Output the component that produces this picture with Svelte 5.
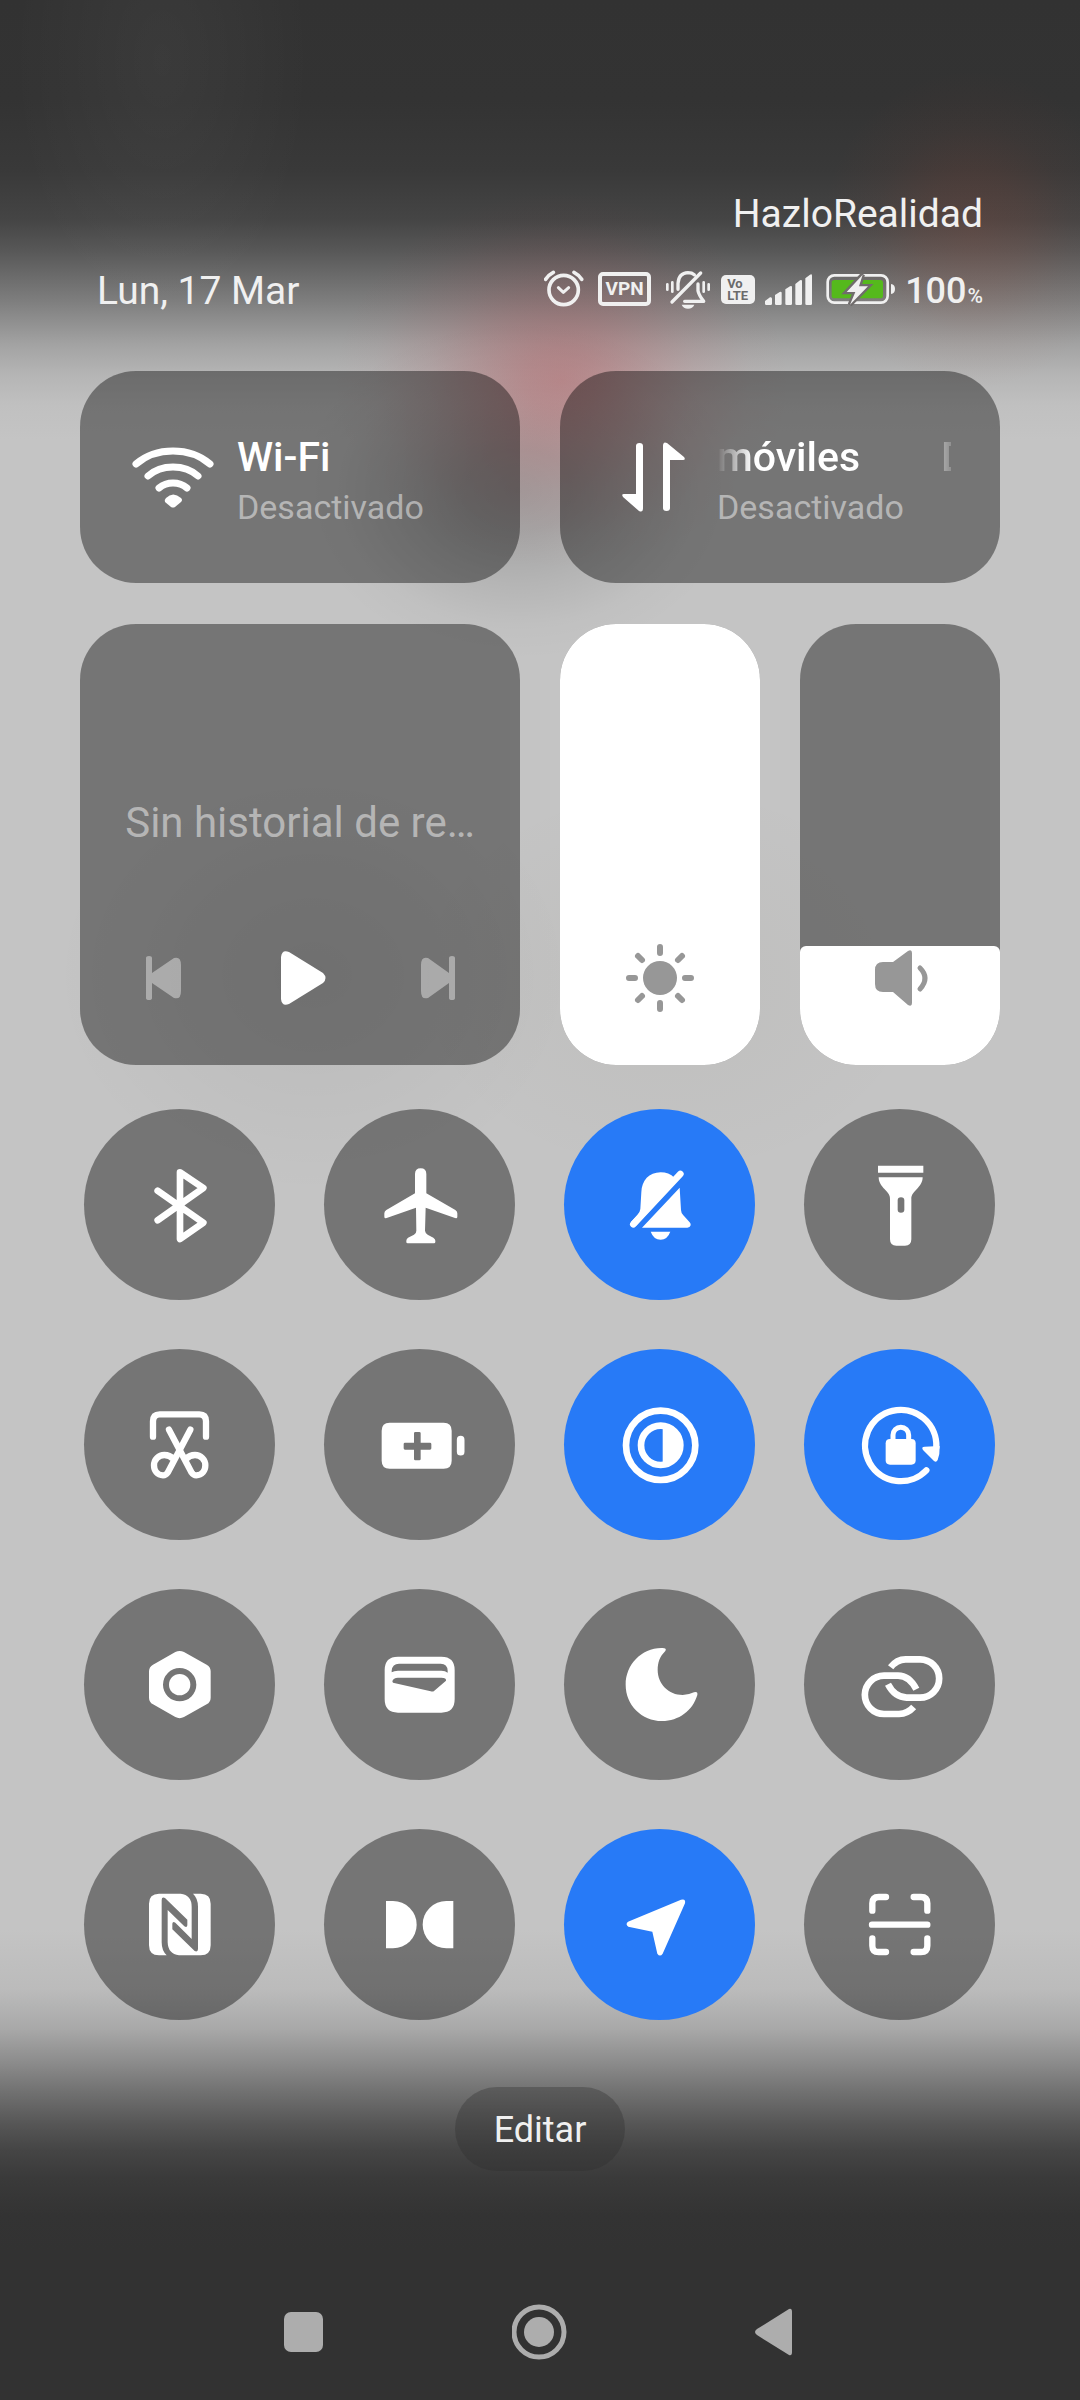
<script>
  let brightness = $state(100);
  let volume = $state(27);

  // Each shape is filled, unless it carries a stroke width (w).
  let toggles = $state([
    { name: 'Bluetooth', on: false, box: '184 169 288 288', shapes: [
      { w: 20, d: 'M261 270L398 366L328 415V215L398 262L261 359' }
    ] },
    { name: 'Modo avión', on: false, box: '904 169 288 288', shapes: [
      { d: 'M1033 220Q1033 203 1050 203Q1067 203 1067 220V278L1154 328Q1160 332 1160 338V348Q1160 354 1153 352L1065 321L1063 390Q1064 398 1071 402L1088 411Q1094 415 1094 420V424Q1094 428 1090 428H1011Q1007 428 1007 424V420Q1007 415 1012 411L1030 402Q1037 398 1037 390L1036 321L948 352Q941 354 941 348V338Q941 332 947 328L1033 278Z' }
    ] },
    { name: 'Silencio', on: true, box: '214 169 288 288', shapes: [
      { d: 'M402 232C390 220 376 215 360 215C325 215 303 240 302 275L299 325Q298 335 290 343L271 364L285 377L410 240Z' },
      { w: 20, d: 'M278 371L419 220' },
      { d: 'M304 381L417 261L421 328Q421 336 428 344L447 365Q451 370 450 374Q448 381 440 381Z' },
      { d: 'M330 393H389Q380 417 360 417Q339 417 330 393Z' }
    ] },
    { name: 'Linterna', on: false, box: '934 169 288 288', shapes: [
      { d: 'M1012 195H1148V216H1012Z' },
      { d: 'M1014 230H1146C1146 245 1138 255 1128 266C1116 279 1112 284 1112 296V416Q1112 435 1093 435H1067Q1048 435 1048 416V296C1048 284 1044 279 1032 266C1022 255 1014 245 1014 230ZM1071 299V327Q1071 336 1081 336Q1091 336 1091 327V299Q1091 290 1081 290Q1071 290 1071 299Z' }
    ] },
    { name: 'Captura de pantalla', on: false, box: '184 889 288 288', shapes: [
      { w: 19, d: 'M247 1008V962Q247 941 267 941H386Q406 941 406 962V1008' },
      { w: 19, d: 'M359 987L291 1116Q286 1124 277 1124C260 1124 250 1110 250 1094C250 1076 264 1063 281 1063Q297 1063 308 1075' },
      { w: 19, d: 'M295 987L363 1116Q368 1124 377 1124C394 1124 404 1110 404 1094C404 1076 390 1063 373 1063Q357 1063 346 1075' }
    ] },
    { name: 'Ahorro de batería', on: false, box: '904 889 288 288', shapes: [
      { d: 'M957 966H1119Q1143 966 1143 990V1080Q1143 1104 1119 1104H957Q933 1104 933 1080V990Q933 966 957 966ZM1034 994Q1030 994 1030 998V1026H1003Q999 1026 999 1030V1043Q999 1047 1003 1047H1030V1075Q1030 1079 1034 1079H1046Q1050 1079 1050 1075V1047H1078Q1082 1047 1082 1043V1030Q1082 1026 1078 1026H1050V998Q1050 994 1046 994Z' },
      { w: 23, d: 'M1170 1017V1053' }
    ] },
    { name: 'Modo oscuro', on: true, box: '214 889 288 288', shapes: [
      { w: 20, d: 'M256 1034A104 104 0 1 1 464 1034A104 104 0 1 1 256 1034Z' },
      { w: 20, d: 'M301 1034A59 59 0 1 1 419 1034A59 59 0 1 1 301 1034Z' },
      { d: 'M366 980A54 54 0 0 1 366 1088Z' }
    ] },
    { name: 'Bloqueo de rotación', on: true, box: '934 889 288 288', shapes: [
      { w: 19, d: 'M1157 1109A107 107 0 1 1 1187 1040' },
      { d: 'M1152 1038Q1141 1038 1147 1048L1180 1081Q1187 1086 1191 1078Q1198 1060 1197 1036Z' },
      { d: 'M1048 1015H1112Q1125 1015 1125 1028V1079Q1125 1092 1112 1092H1048Q1035 1092 1035 1079V1028Q1035 1015 1048 1015Z' },
      { w: 15, d: 'M1057 1022V1003A23 23 0 0 1 1104 1003V1022' }
    ] },
    { name: 'Ajustes', on: false, box: '184 169 288 288', shapes: [
      { d: 'M314 214Q327 208 340 214L408 252Q420 259 420 272V351Q420 364 408 371L340 409Q327 416 314 409L247 371Q235 364 235 351V272Q235 259 247 252ZM277 312A50 50 0 1 0 377 312A50 50 0 1 0 277 312Z' },
      { d: 'M295 312A32 32 0 1 0 359 312A32 32 0 1 0 295 312Z' }
    ] },
    { name: 'Cartera', on: false, box: '904 169 288 288', shapes: [
      { d: 'M982 228H1112Q1152 228 1152 268V356Q1152 396 1112 396H982Q942 396 942 356V268Q942 228 982 228ZM963 275V270Q965 249 985 249H1110Q1130 249 1131 270V276Q1124 270 1112 270H982Q970 270 963 275ZM965 302Q968 291 982 291H1112Q1128 291 1126 300L1091 330Q1087 334 1080 332L967 306Z' }
    ] },
    { name: 'No molestar', on: false, box: '214 169 288 288', shapes: [
      { d: 'M362 202Q380 201 374 211C357 228 351 246 351 268C351 310 384 343 426 343Q443 343 460 335Q472 331 470 343C456 390 415 421 364 421C303 421 255 373 255 312C255 252 302 203 362 202Z' }
    ] },
    { name: 'Compartir conexión', on: false, box: '934 169 288 288', shapes: [
      { w: 20, flat: true, d: 'M1127 326Q1106 285 1072 285H1030A57 57 0 0 0 1030 400H1075Q1101 399 1119 379' },
      { w: 20, flat: true, d: 'M1050 260Q1068 236 1095 236H1138A57 57 0 0 1 1138 351H1098Q1062 350 1042 311' }
    ] },
    { name: 'NFC', on: false, box: '184 889 288 288', shapes: [
      { d: 'M265 939H390Q420 939 420 969V1094Q420 1124 390 1124H265Q235 1124 235 1094V969Q235 939 265 939ZM288 1124Q273 1110 273 1085V958Q273 948 283 952L350 1017V1034Q349 1042 341 1037L291 988V1085Q292 1120 325 1124ZM367 939Q382 953 382 978V1105Q382 1115 372 1111L305 1046V1029Q306 1021 314 1026L363 1075V978Q363 943 330 939Z' }
    ] },
    { name: 'Dolby Atmos', on: false, box: '904 889 288 288', shapes: [
      { d: 'M946 961H967A71 71 0 0 1 967 1103H946Z' },
      { d: 'M1148 961H1127A71 71 0 0 0 1127 1103H1148Z' }
    ] },
    { name: 'Ubicación', on: true, box: '214 889 288 288', shapes: [
      { d: 'M421 957Q436 953 433 968L366 1119Q358 1130 350 1119L335 1053L263 1038Q253 1031 262 1023Z' }
    ] },
    { name: 'Escáner', on: false, box: '934 889 288 288', shapes: [
      { w: 19, d: 'M995 990V968Q995 949 1014 949H1036M1160 990V968Q1160 949 1141 949H1119M995 1073V1095Q995 1114 1014 1114H1036M1160 1073V1095Q1160 1114 1141 1114H1119M994 1032H1160' }
    ] }
  ]);
</script>

<main class="shade">
  <header class="head">
    <p class="carrier">HazloRealidad</p>
    <div class="bar">
      <p class="date">Lun, 17 Mar</p>
      <div class="status">
        <svg width="44" height="44" viewBox="78 297 132 132" aria-hidden="true">
          <g class="line">
            <circle cx="137" cy="360" r="44" stroke-width="11" />
            <path stroke-width="11" d="M83 328Q92 314 106 307M168 307Q182 314 191 328" />
            <path stroke-width="9" d="M121 353L136 367L152 353" />
          </g>
        </svg>
        <span class="vpn">VPN</span>
        <svg width="50" height="44" viewBox="429 297 150 132" aria-hidden="true">
          <g class="line">
            <path stroke-width="10" d="M480 358V340Q482 309 510 308Q522 308 529 314M462 396L548 309M540 342V362Q542 374 557 394H500" />
            <path stroke-width="8" d="M448 343V359M463 337V365M557 337V365M572 343V359" />
          </g>
          <path class="solid" d="M491 404H529Q524 416 510 416Q496 416 491 404Z" />
        </svg>
        <span class="volte">Vo<br />LTE</span>
        <svg width="47" height="44" viewBox="741 297 141 132" aria-hidden="true">
          <path class="solid" d="M741 393L756 382Q762 380 762 386V401Q762 405 758 405H745Q741 405 741 401ZM771 375L785 366Q791 363 791 369V401Q791 405 787 405H775Q771 405 771 401ZM802 358L816 349Q822 346 822 352V401Q822 405 818 405H806Q802 405 802 401ZM832 342L846 331Q852 328 852 334V401Q852 405 848 405H836Q832 405 832 401ZM862 325L876 314Q882 311 882 317V401Q882 405 878 405H866Q862 405 862 401Z" />
        </svg>
        <svg width="73" height="44" viewBox="912 297 219 132" aria-hidden="true">
          <rect class="line" x="929" y="316" width="180" height="82" rx="20" stroke-width="8" />
          <rect class="charge" x="941" y="330" width="154" height="55" rx="8" />
          <path class="solid" d="M1119 342Q1131 344 1131 357Q1131 370 1119 372Z" />
          <path class="halo" d="M1034 314L986 366H1012L996 404L1050 349H1023Z" />
          <path class="solid" d="M1034 314L986 366H1012L996 404L1050 349H1023Z" />
        </svg>
        <span class="level">100<small>%</small></span>
      </div>
    </div>
  </header>

  <section class="cards">
    <button class="card net">
      <svg width="86" height="72" viewBox="130 442 86 72" aria-hidden="true">
        <path class="white-line" d="M136 465Q151 452 173 452Q195 452 210 465M148 477Q158 468 173 468Q188 468 198 477M159 489Q165 484 173 484Q181 484 187 489" />
        <path class="white" d="M166 499Q173 492 181 499Q183 501 181 503L175 508Q173 509 171 508L165 503Q164 501 166 499Z" />
      </svg>
      <span class="words">
        <strong>Wi-Fi</strong>
        <span class="sub">Desactivado</span>
      </span>
    </button>
    <button class="card net">
      <svg width="86" height="72" viewBox="610 442 86 72" aria-hidden="true">
        <path class="white" d="M636 447Q636 444 639.500 444Q643 444 643 447V509Q643 514 639 512L623 498Q621 495 624 495H636ZM670 509Q670 512 666.500 512Q663 512 663 509V447Q663 442 667 444L684 458Q686 461 683 461H670Z" />
      </svg>
      <span class="words">
        <strong class="ticker"><span>móviles</span><span>Datos móviles</span></strong>
        <span class="sub">Desactivado</span>
      </span>
    </button>
  </section>

  <section class="cards">
    <div class="card media">
      <p class="track">Sin historial de re…</p>
      <div class="controls">
        <button aria-label="Anterior">
          <svg class="dim" width="60" height="60" viewBox="0 0 60 60"><path d="M13 10Q13 8 16 8Q19 8 19 10V25L41 10Q48 8 48 17V43Q48 52 41 50L19 35V50Q19 52 16 52Q13 52 13 50Z" /></svg>
        </button>
        <button aria-label="Reproducir">
          <svg class="white" width="60" height="60" viewBox="0 0 60 60"><path d="M11 9Q12 1 19 4L53 25Q58 30 53 35L19 56Q12 59 11 51Z" /></svg>
        </button>
        <button aria-label="Siguiente">
          <svg class="dim" width="60" height="60" viewBox="0 0 60 60"><path d="M48 10Q48 8 45 8Q42 8 42 10V25L21 10Q14 8 14 17V43Q14 52 21 50L42 35V50Q42 52 45 52Q48 52 48 50Z" /></svg>
        </button>
      </div>
    </div>
    <div class="sliders">
      <label class="card slider">
        <span class="fill" style:height="{brightness}%"></span>
        <svg class="mark" width="80" height="80" viewBox="0 0 80 80" aria-hidden="true">
          <circle cx="40" cy="40" r="17" />
          <path class="ray" d="M40 9V15M40 65V71M9 40H15M65 40H71M18 18L22 22M62 18L58 22M18 62L22 58M62 62L58 58" />
        </svg>
        <input type="range" min="0" max="100" bind:value={brightness} aria-label="Brillo" />
      </label>
      <label class="card slider">
        <span class="fill" style:height="{volume}%"></span>
        <svg class="mark" width="80" height="80" viewBox="0 0 80 80" aria-hidden="true">
          <path d="M15 32Q15 24 23 24H33L48 13Q52 11 52 15V65Q52 69 48 67L33 54H23Q15 54 15 46Z" />
          <path class="wave" d="M60 30Q70 40 60 51" />
        </svg>
        <input type="range" min="0" max="100" bind:value={volume} aria-label="Volumen" />
      </label>
    </div>
  </section>

  <section class="toggles">
    {#each toggles as t}
      <button class="toggle" class:on={t.on} aria-label={t.name} aria-pressed={t.on} onclick={() => (t.on = !t.on)}>
        <svg width="96" height="96" viewBox={t.box} aria-hidden="true">
          {#each t.shapes as s}
            <path d={s.d} class:stroke={s.w} class:flat={s.flat} stroke-width={s.w} />
          {/each}
        </svg>
      </button>
    {/each}
  </section>

  <button class="edit">Editar</button>

  <nav class="nav">
    <button aria-label="Recientes">
      <svg width="56" height="56" viewBox="0 0 56 56"><rect x="8" y="8" width="39" height="40" rx="7" /></svg>
    </button>
    <button aria-label="Inicio">
      <svg width="56" height="56" viewBox="0 0 56 56"><circle class="ring" cx="27" cy="28" r="25" /><circle cx="27" cy="28" r="15" /></svg>
    </button>
    <button aria-label="Atrás">
      <svg width="56" height="56" viewBox="0 0 56 56"><path d="M9 25L41 5Q44 4 44 8V48Q44 52 41 51L9 31Q5 28 9 25Z" /></svg>
    </button>
  </nav>
</main>

<style>
  :global(body) {
    margin: 0;
    background: #323232;
  }

  .shade {
    box-sizing: border-box;
    min-height: 100vh;
    padding: 190px 80px 40px;
    display: flex;
    flex-direction: column;
    font-family: Roboto, 'Liberation Sans', sans-serif;
    color: #f0f0f0;
    background:
      radial-gradient(230px 190px at 52% 380px, rgba(195, 50, 58, 0.32), rgba(195, 50, 58, 0.28) 16%, rgba(195, 50, 58, 0.19) 36%, rgba(195, 50, 58, 0.09) 58%, rgba(195, 50, 58, 0.02) 82%, transparent),
      radial-gradient(220px 170px at 48% 490px, rgba(0, 0, 0, 0.19), rgba(0, 0, 0, 0.16) 25%, rgba(0, 0, 0, 0.08) 55%, rgba(0, 0, 0, 0.02) 80%, transparent),
      radial-gradient(150px 160px at 90% 230px, rgba(160, 70, 50, 0.2), rgba(160, 70, 50, 0.14) 35%, rgba(160, 70, 50, 0.05) 65%, transparent),
      radial-gradient(260px 220px at 29% 975px, rgba(0, 0, 0, 0.05), transparent),
      radial-gradient(260px 200px at 62% 980px, rgba(60, 50, 20, 0.04), transparent),
      radial-gradient(150px 260px at 15% 60px, rgba(255, 255, 255, 0.04), transparent),
      linear-gradient(
        #323232 0,
        #333333 100px,
        #393939 170px,
        #454545 220px,
        #575757 250px,
        #7d7d7d 300px,
        #a3a3a3 345px,
        #b5b5b5 375px,
        #c0c0c0 405px,
        #c4c4c4 440px,
        #c4c4c4 calc(100% - 470px),
        #bbbbbb calc(100% - 410px),
        #a9a9a9 calc(100% - 372px),
        #8c8c8c calc(100% - 338px),
        #6f6f6f calc(100% - 306px),
        #565656 calc(100% - 276px),
        #454545 calc(100% - 250px),
        #3a3a3a calc(100% - 222px),
        #333333 calc(100% - 185px),
        #323232 calc(100% - 150px),
        #323232 100%
      );
  }

  button {
    padding: 0;
    border: 0;
    background: none;
    color: inherit;
    font: inherit;
    text-align: left;
    cursor: pointer;
  }

  p {
    margin: 0;
  }

  svg {
    display: block;
    flex: none;
  }

  .head {
    padding: 0 17px;
    font-size: 39px;
    line-height: 48px;
  }

  .carrier {
    text-align: right;
  }

  .bar {
    margin-top: 29px;
    display: flex;
    align-items: center;
    justify-content: space-between;
  }

  .status {
    display: flex;
    align-items: center;
    gap: 10px;
  }

  .line {
    fill: none;
    stroke: #f0f0f0;
    stroke-linecap: round;
    stroke-linejoin: round;
  }

  .solid {
    fill: #f0f0f0;
  }

  .charge {
    fill: #55b91c;
  }

  .halo {
    fill: #706c6c;
    stroke: #706c6c;
    stroke-width: 14;
  }

  .vpn {
    box-sizing: border-box;
    width: 53px;
    margin-bottom: 4px;
    border: 4px solid #f0f0f0;
    border-radius: 5px;
    font-size: 19px;
    font-weight: 700;
    line-height: 26px;
    text-align: center;
  }

  .volte {
    box-sizing: border-box;
    width: 34px;
    margin-bottom: 3px;
    padding: 3px 0 2px 6px;
    border-radius: 5px;
    background: #f0f0f0;
    color: #6b6b6b;
    font-size: 13px;
    font-weight: 700;
    line-height: 12px;
  }

  .level {
    display: flex;
    align-items: baseline;
    gap: 1px;
    font-size: 36px;
    font-weight: 500;
  }

  .level small {
    font-size: 21px;
    line-height: 20px;
  }

  .cards {
    margin-top: 56px;
    display: grid;
    grid-template-columns: 1fr 1fr;
    gap: 40px;
  }

  .cards + .cards {
    margin-top: 41px;
  }

  .card {
    box-sizing: border-box;
    min-width: 0;
    border-radius: 56px;
    background: rgba(0, 0, 0, 0.4);
  }

  .net {
    height: 212px;
    padding: 0 49px 0 50px;
    display: flex;
    align-items: center;
    gap: 21px;
  }

  .white {
    fill: #fff;
  }

  .white-line {
    fill: none;
    stroke: #fff;
    stroke-width: 7;
    stroke-linecap: round;
  }

  .words {
    flex: 1;
    min-width: 0;
    display: flex;
    flex-direction: column;
  }

  .words strong {
    color: #fff;
    font-size: 41px;
    font-weight: 500;
    line-height: 60px;
    white-space: nowrap;
  }

  .sub {
    color: rgba(255, 255, 255, 0.48);
    font-size: 34px;
    line-height: 40px;
  }

  .ticker {
    display: flex;
    gap: 81px;
    overflow: hidden;
    mask-image: linear-gradient(to right, transparent, #000 36px, #000 calc(100% - 36px), rgba(0, 0, 0, 0.2));
  }

  .media {
    min-height: 441px;
    padding: 175px 14px 57px;
    display: flex;
    flex-direction: column;
    justify-content: space-between;
  }

  .track {
    color: rgba(255, 255, 255, 0.48);
    font-size: 42px;
    line-height: 48px;
    text-align: center;
    white-space: nowrap;
  }

  .controls {
    display: grid;
    grid-template-columns: repeat(3, 1fr);
    justify-items: center;
  }

  .dim {
    fill: rgba(255, 255, 255, 0.4);
  }

  .sliders {
    display: grid;
    grid-template-columns: 1fr 1fr;
    gap: 40px;
  }

  .slider {
    position: relative;
    overflow: hidden;
    display: flex;
    flex-direction: column;
    justify-content: flex-end;
  }

  .fill {
    border-radius: 6px 6px 0 0;
    background: #fff;
  }

  .mark {
    position: absolute;
    bottom: 47px;
    left: calc(50% - 40px);
    fill: #979797;
  }

  .ray {
    stroke: #979797;
    stroke-width: 6;
    stroke-linecap: round;
  }

  .wave {
    fill: none;
    stroke: #979797;
    stroke-width: 5;
    stroke-linecap: round;
  }

  .slider input {
    position: absolute;
    inset: 0;
    width: 100%;
    height: 100%;
    margin: 0;
    appearance: none;
    background: transparent;
    writing-mode: vertical-lr;
    direction: rtl;
  }

  .slider input::-webkit-slider-thumb {
    appearance: none;
    width: 100%;
    height: 8px;
    background: transparent;
  }

  .toggles {
    margin-top: 44px;
    padding: 0 5px 0 4px;
    display: grid;
    grid-template-columns: repeat(4, 191px);
    justify-content: space-between;
    row-gap: 49px;
  }

  .toggle {
    height: 191px;
    display: grid;
    place-items: center;
    border-radius: 50%;
    background: rgba(0, 0, 0, 0.4);
  }

  .toggle.on {
    background: #277af7;
  }

  .toggle path {
    fill: #fff;
    fill-rule: evenodd;
  }

  .toggle path.stroke {
    fill: none;
    stroke: #fff;
    stroke-linecap: round;
    stroke-linejoin: round;
  }

  .toggle path.flat {
    stroke-linecap: butt;
  }

  .edit {
    align-self: center;
    margin-top: 67px;
    padding: 2px 39px 0;
    border-radius: 42px;
    background: rgba(46, 46, 46, 0.35);
    font-size: 36px;
    line-height: 82px;
  }

  .nav {
    margin-top: auto;
    display: flex;
    justify-content: center;
    gap: 180px;
    fill: #adadad;
  }

  .ring {
    fill: none;
    stroke: #adadad;
    stroke-width: 5;
  }
</style>
